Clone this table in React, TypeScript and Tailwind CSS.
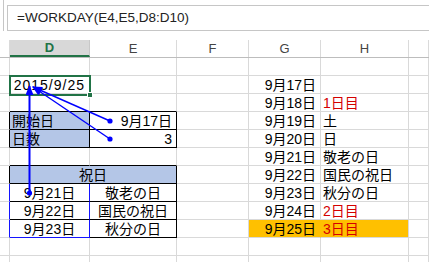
import React from "react";

type CellSpec = {
  t?: string;
  a?: "l" | "r" | "c";
  red?: boolean;
  bg?: string;
  br?: string;
  bb?: string;
  span?: number;
  ls?: boolean;
};

const GRID = "#d9d9d9";
const BLK = "#000000";
const BLU = "#1414ff";
const FILL = "#b4c6e7";
const ORANGE = "#ffc000";

const cols = [10, 80, 87, 72, 72, 88, 20];

function rowsData(): CellSpec[][] {
  const e = (): CellSpec => ({});
  const rows: CellSpec[][] = [];
  // row 1
  rows.push([e(), e(), e(), e(), e(), e(), e()]);
  // row 2
  rows.push([e(), { t: "2015/9/25", a: "r", ls: true }, e(), e(), { t: "9月17日", a: "r" }, e(), e()]);
  // row 3
  rows.push([e(), { bb: BLK }, { bb: BLK }, e(), { t: "9月18日", a: "r" }, { t: "1日目", a: "l", red: true }, e()]);
  // row 4
  rows.push([
    { br: BLK },
    { t: "開始日", a: "l", bg: FILL, br: BLK, bb: BLK },
    { t: "9月17日", a: "r", br: BLK, bb: BLK },
    e(),
    { t: "9月19日", a: "r" },
    { t: "土", a: "l" },
    e(),
  ]);
  // row 5
  rows.push([
    { br: BLK },
    { t: "日数", a: "l", bg: FILL, br: BLK, bb: BLK },
    { t: "3", a: "r", br: BLK, bb: BLK },
    e(),
    { t: "9月20日", a: "r" },
    { t: "日", a: "l" },
    e(),
  ]);
  // row 6
  rows.push([e(), { bb: BLK }, { bb: BLK }, e(), { t: "9月21日", a: "r" }, { t: "敬老の日", a: "l" }, e()]);
  // row 7 (merged D:E)
  rows.push([
    { br: BLK },
    { t: "祝日", a: "c", bg: FILL, br: BLK, bb: BLK, span: 2 },
    e(),
    { t: "9月22日", a: "r" },
    { t: "国民の祝日", a: "l" },
    e(),
  ]);
  // row 8
  rows.push([
    { br: BLU },
    { t: "9月21日", a: "c", br: BLU, bb: BLK },
    { t: "敬老の日", a: "c", br: BLK, bb: BLK },
    e(),
    { t: "9月23日", a: "r" },
    { t: "秋分の日", a: "l" },
    e(),
  ]);
  // row 9
  rows.push([
    { br: BLU },
    { t: "9月22日", a: "c", br: BLU, bb: BLK },
    { t: "国民の祝日", a: "c", br: BLK, bb: BLK },
    e(),
    { t: "9月24日", a: "r" },
    { t: "2日目", a: "l", red: true },
    e(),
  ]);
  // row 10
  rows.push([
    { br: BLU },
    { t: "9月23日", a: "c", br: BLU, bb: BLU },
    { t: "秋分の日", a: "c", br: BLK, bb: BLK },
    e(),
    { t: "9月25日", a: "r", bg: ORANGE, br: ORANGE },
    { t: "3日目", a: "l", red: true, bg: ORANGE },
    e(),
  ]);
  // row 11
  rows.push([e(), e(), e(), e(), e(), e(), e()]);
  // row 12
  rows.push([e(), e(), e(), e(), e(), e(), e()]);
  return rows;
}

function Cell({ c }: { c: CellSpec }) {
  const just =
    c.a === "r" ? "justify-end pr-[4px]" : c.a === "c" ? "justify-center" : "justify-start pl-[2px]";
  return (
    <div
      className={`h-[18px] flex items-center overflow-visible whitespace-nowrap border-r border-b text-[14px] leading-[18px] pt-[1px] ${just}`}
      style={{
        gridColumn: c.span ? `span ${c.span}` : undefined,
        borderRightColor: c.br ?? GRID,
        borderBottomColor: c.bb ?? GRID,
        backgroundColor: c.bg,
        color: c.red ? "#d40000" : "#000",
        letterSpacing: c.ls ? "1px" : undefined,
      }}
    >
      {c.t}
    </div>
  );
}

export default function App() {
  const rows = rowsData();
  const headers = ["", "D", "E", "F", "G", "H", ""];
  return (
    <div
      className="relative w-[429px] h-[262px] overflow-hidden bg-white"
      style={{ fontFamily: '"Liberation Sans", "Noto Sans CJK JP", sans-serif' }}
    >
      {/* formula bar */}
      <div className="flex h-[40px]">
        <div className="w-[4px] h-[31px] border-r border-[#c6c6c6]" />
        <div className="w-[3px]" />
        <div className="flex-1 mt-[5px] h-[26px] border-y border-l border-[#c6c6c6] flex items-center pl-[9px] text-[13.5px] text-[#222]">
          =WORKDAY(E4,E5,D8:D10)
        </div>
      </div>
      {/* column headers */}
      <div className="grid h-[18px] grid-cols-[10px_80px_87px_72px_72px_88px_20px] border-b border-[#bdbdbd]">
        {headers.map((h, i) =>
          i === 1 ? (
            <div
              key={i}
              className="h-[17px] bg-[#d8d8d8] border-r border-[#c8c8c8] border-b-2 border-b-[#217346] flex items-center justify-center text-[13px] font-bold text-[#217346]"
            >
              {h}
            </div>
          ) : (
            <div
              key={i}
              className="h-[17px] border-r border-[#dadada] flex items-center justify-center text-[13px] text-[#444]"
            >
              {h}
            </div>
          )
        )}
      </div>
      {/* cells */}
      <div className="grid grid-cols-[10px_80px_87px_72px_72px_88px_20px]">
        {rows.map((r, ri) => r.map((c, ci) => <Cell key={`${ri}-${ci}`} c={c} />))}
      </div>

      {/* selection box on D2 */}
      <div className="absolute left-[9px] top-[75px] w-[82px] h-[21px] border-2 border-[#217346]" />
      <div className="absolute left-[87px] top-[92px] w-[6px] h-[6px] bg-[#217346] border border-white" />

      {/* tracer arrows */}
      <svg className="absolute left-0 top-0 pointer-events-none" width={429} height={262} viewBox="0 0 429 262">
        <defs>
          <marker id="ah" markerUnits="userSpaceOnUse" markerWidth="10" markerHeight="8" refX="9" refY="4" orient="auto">
            <path d="M0,0 L10,4 L0,8 Z" fill="#0000ff" />
          </marker>
        </defs>
        <line x1={110} y1={121} x2={33} y2={87} stroke="#0000ff" strokeWidth={1.4} markerEnd="url(#ah)" />
        <line x1={110} y1={139} x2={33} y2={87} stroke="#0000ff" strokeWidth={1.4} markerEnd="url(#ah)" />
        <line x1={29.5} y1={193} x2={29.5} y2={86} stroke="#0000ff" strokeWidth={2} markerEnd="url(#ah)" />
        <circle cx={110} cy={121} r={2.6} fill="#0000ff" />
        <circle cx={110} cy={139} r={2.6} fill="#0000ff" />
        <circle cx={29.5} cy={193} r={2.6} fill="#0000ff" />
      </svg>
    </div>
  );
}
